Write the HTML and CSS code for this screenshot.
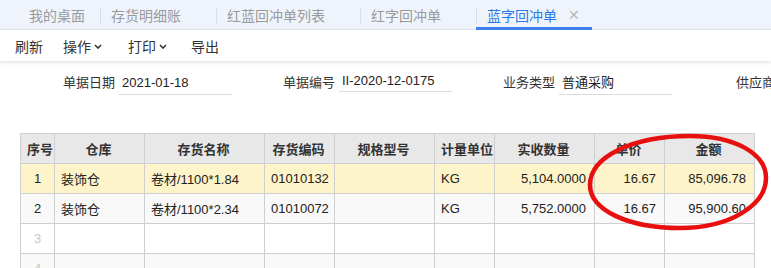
FILE: index.html
```html
<!DOCTYPE html>
<html lang="zh-CN">
<head>
  <meta charset="UTF-8">
  <title>蓝字回冲单</title>
  <link rel="stylesheet" href="styles.css">
</head>
<body>
  <div class="tabs">
    <div class="tab tab-home">我的桌面</div>
    <div class="tab">存货明细账</div>
    <div class="tab">红蓝回冲单列表</div>
    <div class="tab">红字回冲单</div>
    <div class="tab active">蓝字回冲单<span class="tab-close">✕</span></div>
  </div>

  <div class="toolbar">
    <span class="tool">刷新</span>
    <span class="tool">操作<svg class="caret" width="8" height="5" viewBox="0 0 8 5"><path d="M1 1l3 3 3-3" fill="none" stroke="#333" stroke-width="1.6"/></svg></span>
    <span class="tool">打印<svg class="caret" width="8" height="5" viewBox="0 0 8 5"><path d="M1 1l3 3 3-3" fill="none" stroke="#333" stroke-width="1.6"/></svg></span>
    <span class="tool">导出</span>
  </div>

  <div class="form">
    <div class="field"><label>单据日期</label><div class="value">2021-01-18</div></div>
    <div class="field"><label>单据编号</label><div class="value value-up">II-2020-12-0175</div></div>
    <div class="field"><label>业务类型</label><div class="value">普通采购</div></div>
    <div class="field"><label>供应商</label><div class="value"></div></div>
  </div>

  <table class="grid">
    <colgroup>
      <col style="width:34px"><col style="width:90px"><col style="width:120px"><col style="width:70px"><col style="width:100px">
      <col style="width:60px"><col style="width:100px"><col style="width:70px"><col style="width:90px">
    </colgroup>
    <thead>
      <tr><th>序号</th><th>仓库</th><th>存货名称</th><th>存货编码</th><th>规格型号</th><th>计量单位</th><th>实收数量</th><th>单价</th><th>金额</th></tr>
    </thead>
    <tbody>
      <tr class="selected"><td class="seq">1</td><td>装饰仓</td><td>卷材/1100*1.84</td><td>01010132</td><td></td><td>KG</td><td class="num">5,104.0000</td><td class="num">16.67</td><td class="num">85,096.78</td></tr>
      <tr class="alt"><td class="seq">2</td><td>装饰仓</td><td>卷材/1100*2.34</td><td>01010072</td><td></td><td>KG</td><td class="num">5,752.0000</td><td class="num">16.67</td><td class="num">95,900.60</td></tr>
      <tr><td class="seq empty">3</td><td></td><td></td><td></td><td></td><td></td><td></td><td></td><td></td></tr>
      <tr class="alt"><td class="seq empty">4</td><td></td><td></td><td></td><td></td><td></td><td></td><td></td><td></td></tr>
    </tbody>
  </table>

  <!-- red mark drawn over the price columns -->
  <svg class="mark" width="200" height="110" viewBox="0 0 200 110">
    <path d="M10,58 C10,30 52,9 110,9 C154,9 186,26 186,51 C186,78 150,101 100,101 C48,101 10,83 10,58 Z" fill="none" stroke="#e8100f" stroke-width="4.5"/>
  </svg>
</body>
</html>
```

FILE: styles.css
```css
body {
  margin: 0;
  font-family: "Liberation Sans", "Noto Sans CJK SC", sans-serif;
  color: #333;
  background: #fff;
  overflow: hidden;
  position: relative;
}

.tabs {
  display: flex;
  height: 30px;
  background: #eff4fc;
  border-bottom: 1px solid #dde3ec;
  padding-left: 18px;
  box-sizing: border-box;
}

.tab {
  position: relative;
  display: flex;
  align-items: center;
  height: 30px;
  padding: 0 35px 0 11px;
  font-size: 14px;
  color: #9a9a9a;
  box-sizing: border-box;
}

.tab + .tab::before {
  content: "";
  position: absolute;
  left: 0;
  top: 7px;
  height: 17px;
  border-left: 1px solid #dcdfe5;
}

.tab-home {
  padding-right: 15px;
}

.tab.active {
  color: #2b7ae6;
  border-bottom: 3px solid #3a80ee;
  padding-top: 3px;
  padding-right: 11px;
}

.tab-close {
  margin-left: 11px;
  width: 13px;
  font-size: 14px;
  color: #b8b8b8;
}

.toolbar {
  display: flex;
  align-items: center;
  height: 31px;
  padding-left: 15px;
  background: #fff;
  box-shadow: 0 2px 3px rgba(0, 0, 0, 0.1);
  font-size: 14px;
  color: #333;
}

.tool {
  display: flex;
  align-items: center;
  margin-right: 20px;
}

.tool:nth-child(2) { margin-right: 26px; }
.tool:nth-child(3) { margin-right: 24px; }

.caret {
  margin-left: 3px;
  margin-top: 1px;
}

.form {
  display: flex;
  align-items: flex-start;
  padding: 10px 0 0 15px;
  height: 72px;
  box-sizing: border-box;
  white-space: nowrap;
}

.field {
  display: flex;
  align-items: flex-end;
  width: 220px;
  height: 24px;
  flex: none;
  font-size: 13px;
}

.field label {
  width: 100px;
  text-align: right;
  padding-bottom: 4px;
  color: #333;
}

.value {
  width: 113px;
  height: 24px;
  margin-left: 4px;
  padding-left: 3px;
  line-height: 23px;
  border-bottom: 1px solid #dcdcdc;
  box-sizing: border-box;
  color: #222;
}

.value-up {
  height: 21px;
  line-height: 20px;
  margin-bottom: 3px;
}

.grid {
  margin-left: 20px;
  border-collapse: collapse;
  table-layout: fixed;
  width: 735px;
  font-size: 13px;
}

.grid th,
.grid td {
  height: 29px;
  border: 1px solid #cfcfcf;
  padding: 0 8px 0 6px;
  white-space: nowrap;
  overflow: hidden;
}

.grid th {
  background: #e8e8e8;
  font-weight: bold;
  text-align: center;
  color: #333;
  font-family: "Noto Sans CJK SC", sans-serif;
  font-size: 13px;
}

.grid td {
  color: #222;
}

.grid tr.selected td {
  background: #fdf4c9;
}

.grid tr.alt td {
  background: #f9f9f9;
}

.grid td.seq {
  text-align: center;
  padding: 0;
}

.grid td.empty {
  color: #c8c8c8;
}

.grid td.num {
  text-align: right;
}

.mark {
  position: absolute;
  left: 580px;
  top: 127px;
}
```
